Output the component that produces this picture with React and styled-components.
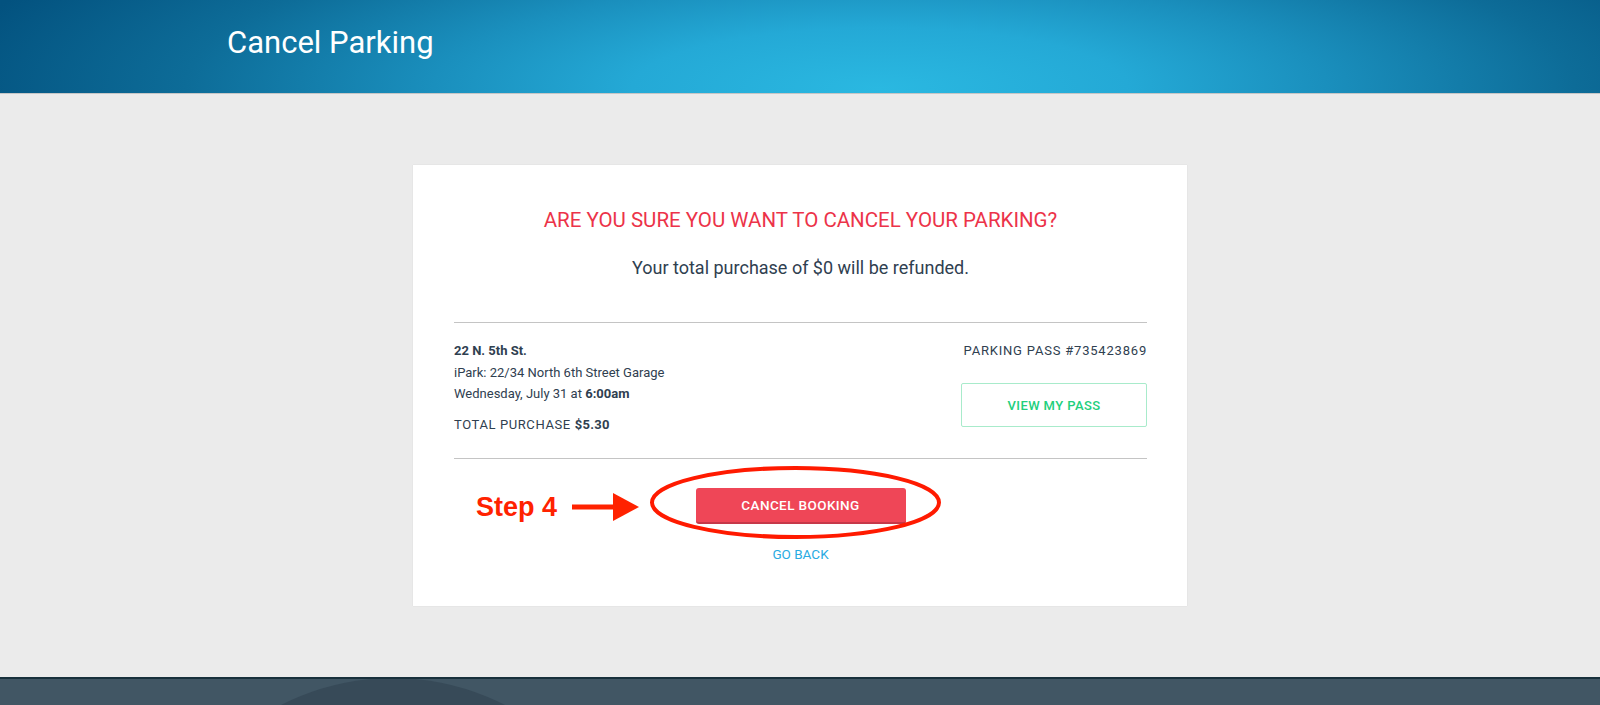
import React from 'react'
import styled, { createGlobalStyle } from 'styled-components'

const GlobalStyle = createGlobalStyle`
  html, body {
    margin: 0;
    padding: 0;
    height: 100%;
    overflow: hidden;
    background: #ebebeb;
    font-family: Roboto, "Open Sans", sans-serif;
  }
`

const Page = styled.div`
  display: flex;
  flex-direction: column;
  height: 705px;
  overflow: hidden;
`

const Header = styled.header`
  height: 93px;
  flex-shrink: 0;
  border-bottom: 1px solid #c6c6c6;
  background:
    radial-gradient(ellipse 62% 260% at 55% 95%, #2ab8e1 0%, #24a9d6 25%, #1a8fbd 45%, #0d6c98 70%, #03527f 95%);
`

const HeaderInner = styled.div`
  width: 1146px;
  margin: 0 auto;
  padding-top: 27px;
`

const Title = styled.h1`
  margin: 0;
  color: #fff;
  font-size: 31px;
  line-height: 31px;
  font-weight: 400;
`

const Main = styled.main`
  flex: 1;
  display: flex;
  justify-content: center;
  align-items: flex-start;
  padding-top: 71px;
`

const Card = styled.section`
  width: 774px;
  box-sizing: border-box;
  background: #fff;
  box-shadow: 0 0 1px rgba(0, 0, 0, 0.12);
  padding: 43px 40px 44px 41px;
  color: #2f4050;
`

const Heading = styled.h2`
  margin: 0;
  text-align: center;
  color: #ec3349;
  font-size: 20.5px;
  line-height: 24px;
  font-weight: 400;
  text-transform: uppercase;
`

const Lead = styled.p`
  margin: 24px 0 42px;
  text-align: center;
  font-size: 18px;
  line-height: 24px;
`

const Details = styled.div`
  display: flex;
  justify-content: space-between;
  border-top: 1px solid #c4c4c4;
  border-bottom: 1px solid #c4c4c4;
  padding: 17px 0 23px;
`

const Info = styled.div`
  display: flex;
  flex-direction: column;
  font-size: 13px;
  line-height: 21.5px;
`

const Street = styled.div`
  font-weight: 700;
`

const Total = styled.div`
  margin-top: 9px;
  text-transform: uppercase;
  letter-spacing: 0.6px;
  b { text-transform: none; letter-spacing: 0.3px; }
`

const PassColumn = styled.div`
  display: flex;
  flex-direction: column;
  align-items: flex-end;
  gap: 21px;
`

const PassNumber = styled.div`
  font-size: 13px;
  line-height: 22px;
  letter-spacing: 0.8px;
  text-transform: uppercase;
`

const OutlineButton = styled.button`
  width: 186px;
  height: 44px;
  background: #fff;
  border: 1px solid #a8ebcb;
  border-radius: 2px;
  color: #22cf7c;
  font-family: inherit;
  font-size: 13px;
  font-weight: 500;
  letter-spacing: 0.4px;
  text-transform: uppercase;
  cursor: pointer;
`

const Actions = styled.div`
  position: relative;
  display: flex;
  flex-direction: column;
  align-items: center;
  padding-top: 29px;
`

const DangerButton = styled.button`
  width: 210px;
  height: 36px;
  background: #ef4657;
  border: none;
  border-bottom: 2px solid #c63849;
  border-radius: 3px;
  color: #fff;
  font-family: inherit;
  font-size: 13.5px;
  font-weight: 500;
  letter-spacing: 0.4px;
  text-transform: uppercase;
  cursor: pointer;
`

const BackLink = styled.a`
  margin-top: 22px;
  color: #29abe2;
  font-size: 13.5px;
  line-height: 16px;
  text-transform: uppercase;
  text-decoration: none;
  cursor: pointer;
`

const StepLabel = styled.span`
  position: absolute;
  left: 22px;
  top: 35px;
  color: #ff2200;
  font-family: "Liberation Sans", Arial, sans-serif;
  font-size: 27px;
  line-height: 27px;
  font-weight: 700;
`

const Mark = styled.svg`
  position: absolute;
  left: ${p => p.$left}px;
  top: ${p => p.$top}px;
  pointer-events: none;
  overflow: visible;
`

const Footer = styled.footer`
  position: relative;
  height: 26px;
  flex-shrink: 0;
  border-top: 2px solid #18303c;
  background: #415664;
  overflow: hidden;

  &::before {
    content: "";
    position: absolute;
    left: 147px;
    top: -1px;
    width: 492px;
    height: 492px;
    border-radius: 50%;
    background: #374a58;
  }
`

export default function App() {
  return (
    <Page>
      <GlobalStyle />
      <Header>
        <HeaderInner>
          <Title>Cancel Parking</Title>
        </HeaderInner>
      </Header>
      <Main>
        <Card>
          <Heading>Are you sure you want to cancel your parking?</Heading>
          <Lead>Your total purchase of $0 will be refunded.</Lead>
          <Details>
            <Info>
              <Street>22 N. 5th St.</Street>
              <div>iPark: 22/34 North 6th Street Garage</div>
              <div>Wednesday, July 31 at <b>6:00am</b></div>
              <Total>Total purchase <b>$5.30</b></Total>
            </Info>
            <PassColumn>
              <PassNumber>Parking pass #735423869</PassNumber>
              <OutlineButton>View my pass</OutlineButton>
            </PassColumn>
          </Details>
          <Actions>
            <StepLabel>Step 4</StepLabel>
            <Mark $left={118} $top={34} width="67" height="28" viewBox="0 0 67 28">
              <rect x="0" y="11.5" width="43" height="5" fill="#ff2200" />
              <polygon points="41,0 67,14 41,28" fill="#ff2200" />
            </Mark>
            <DangerButton>Cancel booking</DangerButton>
            <BackLink>Go back</BackLink>
            <Mark $left={196} $top={7} width="291" height="73" viewBox="0 0 291 73">
              <ellipse cx="145.5" cy="36.5" rx="143.5" ry="34.5" fill="none" stroke="#ff1a00" strokeWidth="4" />
            </Mark>
          </Actions>
        </Card>
      </Main>
      <Footer />
    </Page>
  )
}
